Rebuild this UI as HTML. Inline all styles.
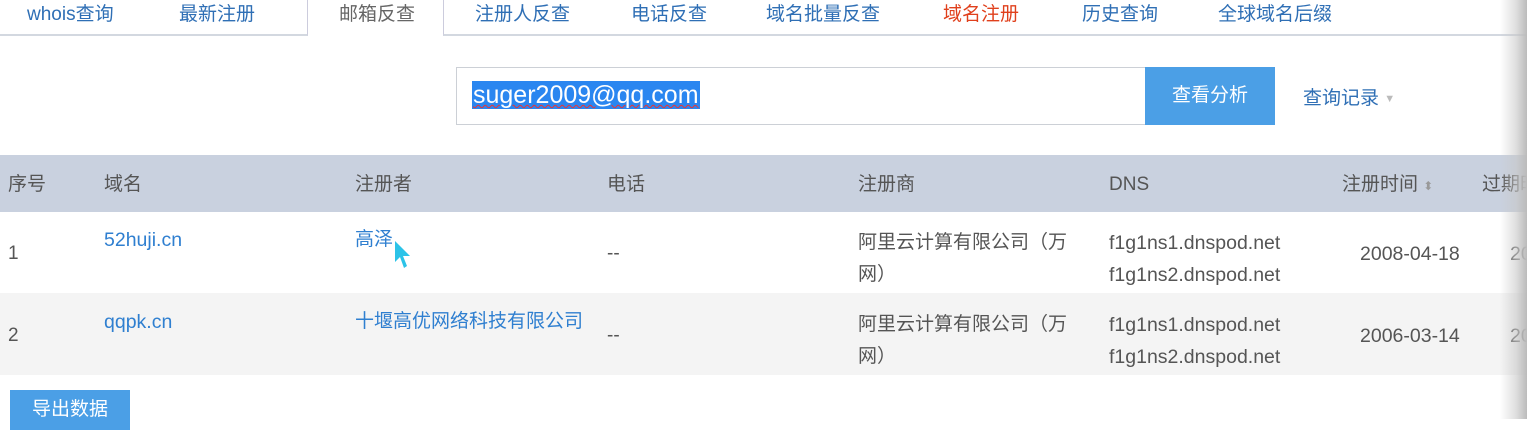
<!DOCTYPE html>
<html><head><meta charset="utf-8"><style>
*{margin:0;padding:0;box-sizing:border-box}
body{width:1527px;height:419px;overflow:hidden;background:#fff;font-family:"Liberation Sans","Noto Sans CJK SC",sans-serif;position:relative;color:#555}
.a{position:absolute;white-space:nowrap}
.tab{font-size:19px;color:#2f6fb5;top:2px;line-height:26px}
.h{font-size:19px;color:#555;top:172px;line-height:26px}
.c{font-size:19px;line-height:26px}
.e{font-size:19.5px}
.l{color:#2f7fd0}
</style></head><body>
<div class="a" style="left:0;top:0;width:308px;height:36px;border-right:1px solid #ccd;border-bottom:2px solid #d3d8e0"></div>
<div class="a" style="left:443px;top:0;width:1084px;height:36px;border-left:1px solid #ccd;border-bottom:2px solid #d3d8e0"></div>
<div class="a tab" style="left:27px">whois查询</div>
<div class="a tab" style="left:179px">最新注册</div>
<div class="a tab" style="left:339px;color:#666">邮箱反查</div>
<div class="a tab" style="left:475px">注册人反查</div>
<div class="a tab" style="left:631px">电话反查</div>
<div class="a tab" style="left:766px">域名批量反查</div>
<div class="a tab" style="left:943px;color:#e0401c">域名注册</div>
<div class="a tab" style="left:1082px">历史查询</div>
<div class="a tab" style="left:1218px">全球域名后缀</div>
<div class="a" style="left:456px;top:67px;width:690px;height:58px;border:1px solid #ccd0d6"></div>
<div class="a" style="left:472px;top:81px;height:28px;background:#2a86f0;color:#fff;font-size:25px;line-height:28px;padding:0 1px;text-decoration:underline wavy #e33;text-decoration-thickness:1px">suger2009@qq.com</div>
<div class="a" style="left:1145px;top:67px;width:130px;height:58px;background:#4b9fe6;color:#fff;font-size:19px;line-height:58px;text-align:center">查看分析</div>
<div class="a" style="left:1303px;top:83px;font-size:19px;color:#2f6fb5">查询记录 <span style="color:#bbb;font-size:11px;vertical-align:middle">▼</span></div>
<div class="a" style="left:0;top:155px;width:1527px;height:57px;background:#c9d1df"></div>
<div class="a" style="left:0;top:293px;width:1527px;height:82px;background:#f4f4f4"></div>
<div class="a h" style="left:8px">序号</div>
<div class="a h" style="left:104px">域名</div>
<div class="a h" style="left:355px">注册者</div>
<div class="a h" style="left:607px">电话</div>
<div class="a h" style="left:858px">注册商</div>
<div class="a h" style="left:1109px">DNS</div>
<div class="a h" style="left:1342px">注册时间 <span style="color:#999;font-size:12px">⬍</span></div>
<div class="a h" style="left:1482px">过期时间</div>
<div class="a c" style="left:8px;top:241px">1</div>
<div class="a c l e" style="left:104px;top:227px">52huji.cn</div>
<div class="a c l" style="left:355px;top:227px">高泽</div>
<svg class="a" style="left:394px;top:240px" width="18" height="30"><path d="M1 1 L1 22 L6 17 L10 28 L13 26 L9 16 L16 16 Z" fill="#2cc3e8"/></svg>
<div class="a c" style="left:607px;top:241px">--</div>
<div class="a c" style="left:858px;top:227px;line-height:32px">阿里云计算有限公司（万<br>网）</div>
<div class="a c e" style="left:1109px;top:227px;line-height:32px">f1g1ns1.dnspod.net<br>f1g1ns2.dnspod.net</div>
<div class="a c e" style="left:1360px;top:241px">2008-04-18</div>
<div class="a c e" style="left:1510px;top:241px">20</div>
<div class="a c" style="left:8px;top:323px">2</div>
<div class="a c l e" style="left:104px;top:309px">qqpk.cn</div>
<div class="a c l" style="left:355px;top:309px">十堰高优网络科技有限公司</div>
<div class="a c" style="left:607px;top:323px">--</div>
<div class="a c" style="left:858px;top:309px;line-height:32px">阿里云计算有限公司（万<br>网）</div>
<div class="a c e" style="left:1109px;top:309px;line-height:32px">f1g1ns1.dnspod.net<br>f1g1ns2.dnspod.net</div>
<div class="a c e" style="left:1360px;top:323px">2006-03-14</div>
<div class="a c e" style="left:1510px;top:323px">20</div>
<div class="a" style="left:10px;top:390px;width:120px;height:40px;background:#4b9fe6;color:#fff;font-size:19px;line-height:40px;text-align:center">导出数据</div>
<div class="a" style="left:1500px;top:0;width:27px;height:419px;background:linear-gradient(to right,rgba(255,255,255,0),rgba(200,200,200,.6) 60%,#bbb)"></div>
</body></html>
